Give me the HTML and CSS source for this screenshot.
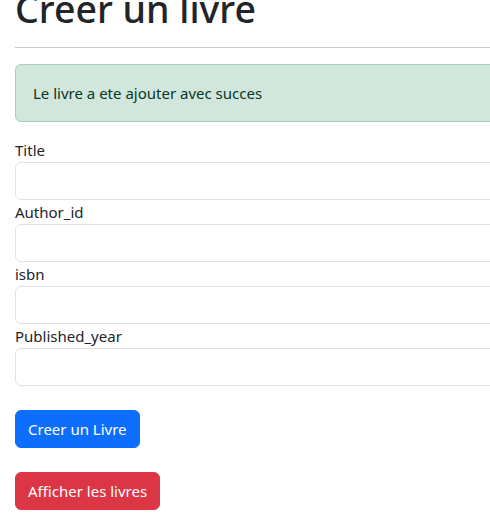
FILE: index.html
```html
<!DOCTYPE html>
<html lang="fr">
<head>
<meta charset="utf-8">
<title>Creer un livre</title>
<link rel="stylesheet" href="styles.css">
</head>
<body>
<div class="page">
  <h1 class="title">Creer un livre</h1>
  <hr class="rule">
  <div class="alert">Le livre a ete ajouter avec succes</div>
  <form class="book-form">
    <div class="field">
      <label class="label" for="title">Title</label>
      <input class="control" id="title" type="text">
    </div>
    <div class="field">
      <label class="label" for="author">Author_id</label>
      <input class="control" id="author" type="text">
    </div>
    <div class="field">
      <label class="label" for="isbn">isbn</label>
      <input class="control" id="isbn" type="text">
    </div>
    <div class="field">
      <label class="label" for="year">Published_year</label>
      <input class="control" id="year" type="text">
    </div>
    <div class="actions">
      <button class="btn btn-primary" type="button">Creer un Livre</button>
    </div>
  </form>
  <div class="actions">
    <a class="btn btn-danger" href="#">Afficher les livres</a>
  </div>
</div>
</body>
</html>
```

FILE: styles.css
```css
html, body {
  margin: 0;
  padding: 0;
  overflow: hidden;
  background: #fff;
}
body {
  font-family: "Noto Sans", "Open Sans", sans-serif;
  font-size: 15px;
  line-height: 24px;
  color: #212529;
}
.page {
  width: 640px;
  padding-left: 15px;
  display: flex;
  flex-direction: column;
  align-items: flex-start;
}
.title {
  margin: -15px 0 -2px 0;
  font-size: 37.5px;
  line-height: 48px;
  font-weight: 500;
}
.rule {
  align-self: stretch;
  margin: 16px 0;
  border: 0;
  border-top: 1px solid #c8c9ca;
  height: 0;
}
.alert {
  align-self: stretch;
  padding: 16px 17px;
  background: #d1e7dd;
  border: 1px solid #a3cfbb;
  border-radius: 6px;
  color: #0a3622;
  margin-bottom: 16px;
}
.book-form {
  align-self: stretch;
  display: flex;
  flex-direction: column;
}
.field {
  display: flex;
  flex-direction: column;
}
.label {
  display: block;
}
.control {
  box-sizing: border-box;
  height: 38px;
  width: 100%;
  border: 1px solid #dee2e6;
  border-radius: 6px;
  padding: 6px 12px;
  font: inherit;
  background: #fff;
}
.actions {
  margin-top: 24px;
}
.btn {
  display: inline-block;
  box-sizing: border-box;
  height: 38px;
  padding: 6px 12px;
  border: 1px solid transparent;
  border-radius: 6px;
  font: inherit;
  line-height: 24px;
  color: #fff;
  text-decoration: none;
}
.btn-primary {
  background: #0d6efd;
  border-color: #0d6efd;
}
.btn-danger {
  background: #dc3545;
  border-color: #dc3545;
}
```
